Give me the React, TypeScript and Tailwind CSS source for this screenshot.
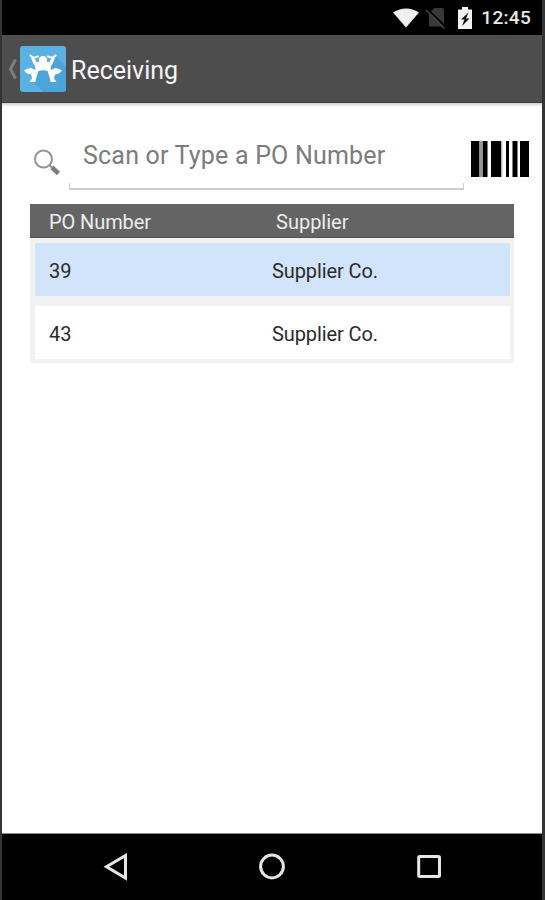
const orders = [
  { po: "39", supplier: "Supplier Co.", selected: true },
  { po: "43", supplier: "Supplier Co.", selected: false },
];

function StatusBar() {
  return (
    <div className="flex h-[35px] shrink-0 items-center justify-end bg-black pt-px pr-[11px]">
      <svg width="26" height="20" viewBox="0 0 26 20" className="mr-[7px]">
        <path d="M0 4.5Q13-3.5 26 4.5L13 19.500Z" fill="#f0f0f0" />
      </svg>
      <svg width="20" height="22" viewBox="0 0 20 22" className="mr-[12px]">
        <path d="M8 1h8.500q1.500 0 1.500 1.500V19.500H3V7Z" fill="#383838" />
        <path d="M1 1.500L19.500 20" stroke="#000" strokeWidth="2" />
        <path d="M0 3L18.500 21.500" stroke="#484848" strokeWidth="1.500" />
      </svg>
      <svg width="14" height="22" viewBox="0 0 14 22" className="mr-[9px]">
        <path d="M4 0h6v2.500h4V22H0V2.500h4Z" fill="#f2f2f2" />
        <path d="M10.500 5.500L3 12.500h3.500L4 19l7.500-7.500H8Z" fill="#111" />
      </svg>
      <span className="text-[19px] leading-6 font-medium tracking-[0.3px] text-[#e8e8e8]">
        12:45
      </span>
    </div>
  );
}

function AppLogo() {
  return (
    <svg width="46" height="46" viewBox="0 0 46 46" className="shrink-0">
      <rect width="46" height="46" rx="3" fill="#5ab1e2" />
      <path d="M35 10L46 20V43q0 3-3 3H23L12 35 9 26l20-8Z" fill="#4ca5d8" />
      <g fill="none" stroke="#fff" strokeLinecap="round" strokeLinejoin="round">
        <path d="M13 12.500L15.500 18 20 18.500M33 12.500L30.500 18 26 18.500" strokeWidth="3.200" />
        <path d="M10.500 9.500L13 12 18 10.500M35.500 9.500L33 12 28 10.500" strokeWidth="2" />
      </g>
      <circle cx="23" cy="14" r="4" fill="#fff" />
      <path
        d="M16 16h14l1 5q-1 2 0 3l4-2q4 0 7 2.500-3 4-7 4l-1 4 2.500 3.500h-6l-1-5-2-6q-4.500-1.500-9 0l-2 6-1 5h-6L12 32.500l-1-4q-4 0-7-4 3-2.500 7-2.500l4 2q1-1 0-3Z"
        fill="#fff"
      />
    </svg>
  );
}

function Header() {
  return (
    <header className="flex h-[68px] shrink-0 items-center border-b border-[#3c3c3c] bg-[#4d4d4d] pl-[5px]">
      <svg width="11" height="22" viewBox="0 0 11 22" className="mr-[2px]">
        <path d="M8.500 1.500L3.500 11l5 9.500" fill="none" stroke="#7e7e7e" strokeWidth="3" />
      </svg>
      <AppLogo />
      <h1 className="ml-[5px] pt-[5px] text-[25px] leading-8 font-normal text-[#f5f5f5]">
        Receiving
      </h1>
    </header>
  );
}

function SearchRow() {
  return (
    <div className="flex h-[101px] shrink-0 items-start pl-[31px]">
      <svg width="28" height="28" viewBox="0 0 28 28" className="mt-[46px]">
        <circle cx="10.500" cy="10" r="8.500" fill="none" stroke="#949494" strokeWidth="2" />
        <path d="M16.500 16l3 3" stroke="#949494" strokeWidth="2" />
        <path d="M19 18.500l6.500 6" stroke="#7d7d7d" strokeWidth="4.500" />
      </svg>
      <div className="mt-[34px] ml-[8px] w-[395px]">
        <div className="h-[46px] pt-px pl-[14px] text-[25px] leading-9 tracking-[0.2px] whitespace-nowrap text-[#7c7c7c]">
          Scan or Type a PO Number
        </div>
        <div className="h-[7px] border-x border-b-2 border-[#cfcfcf]" />
      </div>
      <svg width="58" height="36" viewBox="0 0 58 36" className="mt-[38px] ml-[7px]">
        <path
          d="M0 0h8.500v36H0ZM11.500 0h5v36h-5ZM20 0h10v36H20ZM35 0h3v36h-3ZM41.500 0h5v36h-5ZM49 0h9v36h-9Z"
          fill="#000"
        />
        <path d="M8.500 0h3v36h-3Z" fill="#999" />
        <path d="M30 0h1.500v36H30Z" fill="#bbb" />
      </svg>
    </div>
  );
}

function OrderTable() {
  return (
    <div className="ml-[28px] w-[484px] bg-[#f2f2f2] text-[20px] leading-[24px]">
      <div className="flex h-[34px] items-center border-b border-[#505050] bg-[#646464] pl-[19px] text-[#ededed]">
        <span className="w-[227px] pt-[3px] tracking-[-0.1px]">PO Number</span>
        <span className="pt-[3px]">Supplier</span>
      </div>
      <div className="flex flex-col gap-[10px] pt-[5px] pr-[4px] pb-[4px] pl-[5px]">
        {orders.map((order) => (
          <div
            key={order.po}
            className={`flex h-[53px] items-center pt-[2px] pl-[14px] tracking-[-0.1px] text-[#2b2b2b] ${
              order.selected ? "bg-[#d2e4fc]" : "bg-white"
            }`}
          >
            <span className="w-[223px]">{order.po}</span>
            <span>{order.supplier}</span>
          </div>
        ))}
      </div>
    </div>
  );
}

function NavigationBar() {
  return (
    <nav className="flex h-[67px] shrink-0 items-center border-t border-[#888] bg-black pl-[100px]">
      <svg width="26" height="28" viewBox="0 0 26 28">
        <path d="M23.500 2.500v22.500L4.500 13.750Z" fill="none" stroke="#e6e6e6" strokeWidth="3" />
      </svg>
      <svg width="28" height="28" viewBox="0 0 28 28" className="ml-[130px]">
        <circle cx="14" cy="13.500" r="11.400" fill="none" stroke="#e6e6e6" strokeWidth="3" />
      </svg>
      <svg width="26" height="26" viewBox="0 0 26 26" className="ml-[130px]">
        <rect x="2.700" y="2.500" width="20.800" height="20" rx="1" fill="none" stroke="#e6e6e6" strokeWidth="3" />
      </svg>
    </nav>
  );
}

export default function App() {
  return (
    <div className="flex h-[900px] w-[545px] flex-col overflow-hidden border-r-3 border-l-2 border-[#343434] bg-white font-[Roboto,sans-serif]">
      <StatusBar />
      <Header />
      <main className="flex flex-1 flex-col bg-white shadow-[inset_0_3px_3px_-1px_#d0d0d0]">
        <SearchRow />
        <OrderTable />
      </main>
      <NavigationBar />
    </div>
  );
}
